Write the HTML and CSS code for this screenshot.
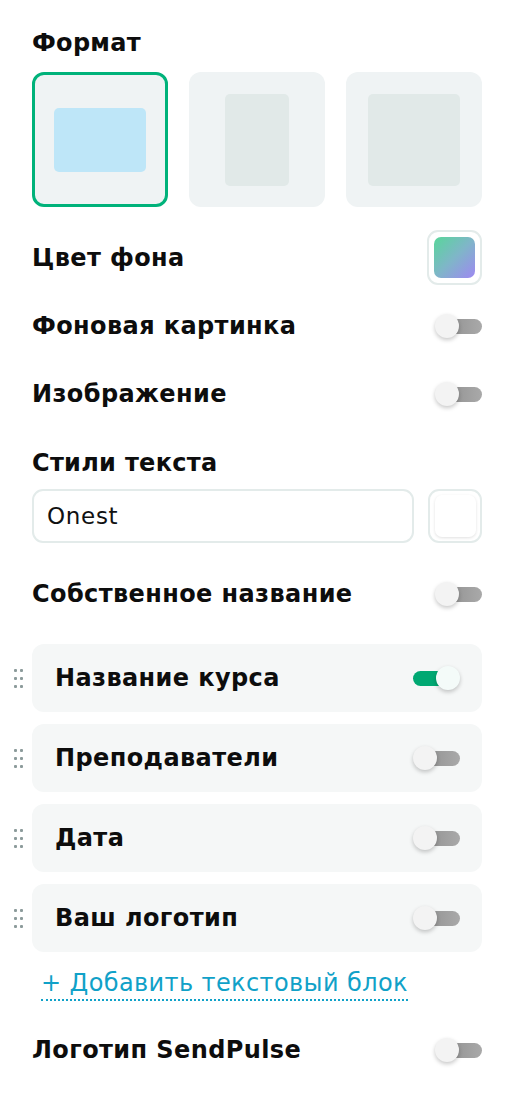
FILE: index.html
```html
<!DOCTYPE html>
<html lang="ru">
<head>
<meta charset="utf-8">
<link rel="stylesheet" href="styles.css">
</head>
<body>
<div class="panel">
  <h2 class="title title-format">Формат</h2>
  <div class="formats">
    <div class="tile tile-active"><div class="shape shape-land"></div></div>
    <div class="tile"><div class="shape shape-port"></div></div>
    <div class="tile"><div class="shape shape-square"></div></div>
  </div>

  <div class="row row-color">
    <span class="label">Цвет фона</span>
    <div class="swatch"><div class="swatch-inner"></div></div>
  </div>

  <div class="row row-bgimg">
    <span class="label">Фоновая картинка</span>
    <span class="toggle"><span class="track"></span><span class="knob"></span></span>
  </div>

  <div class="row row-img">
    <span class="label">Изображение</span>
    <span class="toggle"><span class="track"></span><span class="knob"></span></span>
  </div>

  <h2 class="title title-styles">Стили текста</h2>
  <div class="font-row">
    <div class="font-input">Onest</div>
    <div class="font-color"><div class="font-color-inner"></div></div>
  </div>

  <div class="row row-own">
    <span class="label">Собственное название</span>
    <span class="toggle"><span class="track"></span><span class="knob"></span></span>
  </div>

  <div class="blocks">
    <div class="block">
      <span class="handle"><i></i><i></i><i></i><i></i><i></i><i></i></span>
      <div class="card">
        <span class="label">Название курса</span>
        <span class="toggle toggle-on"><span class="track"></span><span class="knob"></span></span>
      </div>
    </div>
    <div class="block">
      <span class="handle"><i></i><i></i><i></i><i></i><i></i><i></i></span>
      <div class="card">
        <span class="label">Преподаватели</span>
        <span class="toggle"><span class="track"></span><span class="knob"></span></span>
      </div>
    </div>
    <div class="block">
      <span class="handle"><i></i><i></i><i></i><i></i><i></i><i></i></span>
      <div class="card">
        <span class="label">Дата</span>
        <span class="toggle"><span class="track"></span><span class="knob"></span></span>
      </div>
    </div>
    <div class="block">
      <span class="handle"><i></i><i></i><i></i><i></i><i></i><i></i></span>
      <div class="card">
        <span class="label">Ваш логотип</span>
        <span class="toggle"><span class="track"></span><span class="knob"></span></span>
      </div>
    </div>
  </div>

  <div class="add-wrap"><a class="add-link">+ Добавить текстовый блок</a></div>

  <div class="row row-logo">
    <span class="label">Логотип SendPulse</span>
    <span class="toggle"><span class="track"></span><span class="knob"></span></span>
  </div>
</div>
</body>
</html>
```

FILE: styles.css
```css
* { box-sizing: border-box; }
html, body { margin: 0; padding: 0; background: #ffffff; }
body {
  font-family: "DejaVu Sans", "Noto Sans", sans-serif;
  color: #0d0d0d;
}
.panel {
  width: 520px;
  padding: 0 38px 0 32px;
  display: flex;
  flex-direction: column;
}
.title {
  margin: 0;
  font-size: 24px;
  font-weight: 700;
  line-height: 28px;
  letter-spacing: 0.3px;
}
.title-format { margin-top: 29px; }
.formats {
  margin-top: 15px;
  display: flex;
  gap: 21px;
}
.tile {
  width: 136px;
  height: 135px;
  border-radius: 12px;
  background: #eff3f4;
  display: flex;
  align-items: center;
  justify-content: center;
}
.tile-active { border: 3px solid #00b27a; }
.shape { border-radius: 5px; background: #e1e9e8; }
.shape-land { width: 92px; height: 64px; background: #bee6f8; }
.shape-port { width: 64px; height: 92px; }
.shape-square { width: 92px; height: 92px; }

.row {
  display: flex;
  align-items: center;
  justify-content: space-between;
  height: 40px;
}
.label {
  font-size: 24px;
  font-weight: 700;
  line-height: 28px;
  letter-spacing: 0.4px;
}
.row-color { height: 55px; margin-top: 23px; }
.row-bgimg { margin-top: 21px; }
.row-img { margin-top: 28px; }
.row-own { margin-top: 31px; }
.row-logo { margin-top: 29px; }

.swatch {
  width: 55px;
  height: 55px;
  border: 2px solid #e3ebea;
  border-radius: 11px;
  display: flex;
  align-items: center;
  justify-content: center;
}
.swatch-inner {
  width: 41px;
  height: 41px;
  border-radius: 7px;
  background: linear-gradient(135deg, #58d69a 0%, #7fb6c8 50%, #9e88f2 100%);
}

.toggle {
  position: relative;
  display: block;
  width: 47px;
  height: 24px;
  flex: none;
}
.toggle .track {
  position: absolute;
  left: 5px;
  right: 0;
  top: 4.5px;
  height: 15px;
  border-radius: 8px;
  background: linear-gradient(90deg, #8d8d8d, #a9a9a9);
}
.toggle .knob {
  position: absolute;
  left: 0;
  top: 0;
  width: 24px;
  height: 24px;
  border-radius: 50%;
  background: #f3f3f3;
  box-shadow: 0 2px 4px rgba(0,0,0,0.22);
}
.toggle-on .track {
  left: 0;
  right: 5px;
  background: #00a872;
}
.toggle-on .knob {
  left: 23px;
  background: #f4fbf9;
}

.title-styles { margin-top: 35px; }
.font-row {
  margin-top: 12px;
  display: flex;
  gap: 14px;
}
.font-input {
  flex: 1;
  height: 54px;
  border: 2px solid #e3ebea;
  border-radius: 11px;
  padding: 0 13px;
  display: flex;
  align-items: center;
  font-size: 23px;
  font-weight: 400;
  letter-spacing: 0.7px;
  color: #111;
}
.font-color {
  width: 54px;
  height: 54px;
  border: 2px solid #e3ebea;
  border-radius: 11px;
  display: flex;
  align-items: center;
  justify-content: center;
}
.font-color-inner {
  width: 41px;
  height: 42px;
  border-radius: 7px;
  background: #fff;
  box-shadow: 0 1px 3px rgba(0,0,0,0.12);
}

.blocks {
  margin-top: 30px;
  display: flex;
  flex-direction: column;
  gap: 12px;
}
.block {
  display: flex;
  align-items: center;
  margin-left: -32px;
}
.handle {
  width: 32px;
  padding-left: 14px;
  display: grid;
  grid-template-columns: 3px 3px;
  column-gap: 3px;
  row-gap: 5px;
  align-content: center;
}
.handle i {
  display: block;
  width: 3px;
  height: 3px;
  border-radius: 1px;
  background: #8c9b9b;
}
.card {
  flex: 1;
  height: 68px;
  border-radius: 12px;
  background: #f5f7f7;
  padding: 0 22px 0 23px;
  display: flex;
  align-items: center;
  justify-content: space-between;
}

.add-wrap { margin-top: 17px; padding-left: 9px; }
.add-link {
  display: inline-block;
  font-size: 24px;
  font-weight: 400;
  line-height: 28px;
  letter-spacing: 0.4px;
  color: #10a1c8;
  padding-bottom: 2px;
  border-bottom: 2px dotted #10a1c8;
}
```
